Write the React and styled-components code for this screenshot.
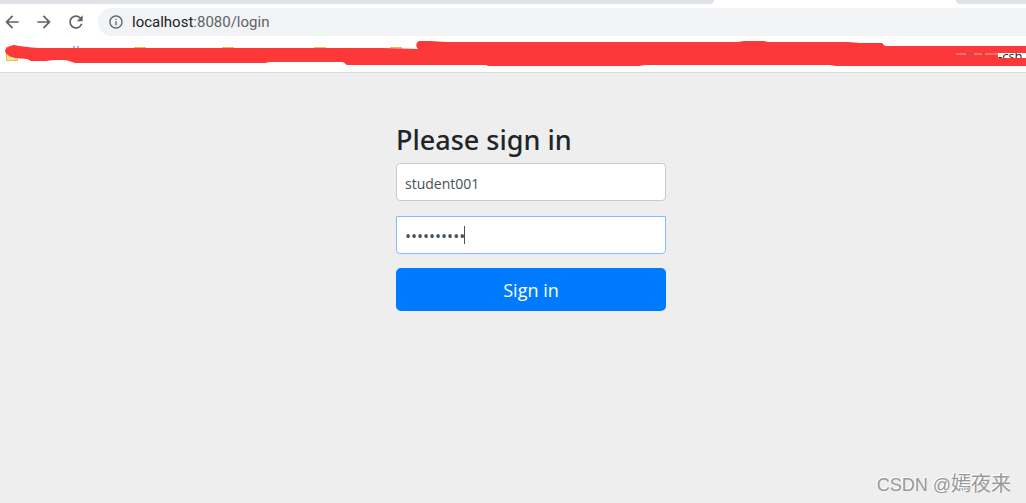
import { useState } from "react";
import styled, { createGlobalStyle } from "styled-components";
import { MdArrowBack, MdArrowForward, MdRefresh, MdInfoOutline } from "react-icons/md";

const GlobalStyle = createGlobalStyle`
	* {
		box-sizing: border-box;
	}

	body {
		margin: 0;
		background-color: #eee;
		font-family: "Open Sans", "Noto Sans", sans-serif;
		color: #212529;
	}
`;

const Page = styled.div`
	display: flex;
	flex-direction: column;
	min-height: 100vh;
	overflow: hidden;
`;

const TabStrip = styled.div`
	display: flex;
	justify-content: space-between;
	height: 4px;
	background-color: #fff;
`;

const InactiveTabs = styled.div`
	width: ${({ $width }) => $width};
	background-color: #dee1e6;
	border-radius: ${({ $side }) => ($side === "left" ? "0 0 6px 0" : "0 0 0 6px")};
`;

const Toolbar = styled.div`
	display: flex;
	align-items: center;
	height: 36px;
	padding-left: 2px;
	background-color: #fff;
`;

const NavButton = styled.button`
	display: flex;
	align-items: center;
	justify-content: center;
	width: 20px;
	height: 20px;
	margin-right: 12px;
	padding: 0;
	border: 0;
	background: none;
	color: #5f6368;
	font-size: 20px;
`;

const AddressBar = styled.div`
	display: flex;
	flex: 1;
	align-items: center;
	gap: 8px;
	height: 28px;
	padding-left: 10px;
	border-radius: 14px 0 0 14px;
	background-color: #f1f3f4;
	color: #5f6368;
	font-family: Roboto, sans-serif;
	font-size: 15px;

	& b {
		color: #202124;
		font-weight: 400;
	}
`;

const BookmarksBar = styled.div`
	position: relative;
	display: grid;
	grid-template-columns: 128px 88px 92px 76px 1fr;
	height: 33px;
	padding: 7px 0 0 6px;
	border-bottom: 1px solid #d9d9d9;
	background-color: #fff;
`;

const Folder = styled.span`
	width: 12px;
	height: 14px;
	border: 1px solid #e8c04a;
	background-color: #fde68c;
`;

const Scribble = styled.svg`
	position: absolute;
	top: 0;
	left: 0;
`;

const BookmarkTail = styled.span`
	position: absolute;
	top: 13px;
	right: 0;
	display: flex;
	align-items: center;
	width: 28px;
	height: 5px;
	overflow: hidden;
	background-color: #fff;
	color: #202124;
	font-size: 13px;
	line-height: 12px;
`;

/* the browser window is wider than the visible part */
const Main = styled.main`
	flex: 1;
	padding: 50px 0 0 36px;
`;

const Form = styled.form`
	display: flex;
	flex-direction: column;
	width: 270px;
	margin: 0 auto;
`;

const Title = styled.h2`
	margin: 0 0 6px;
	font-family: "Noto Sans", sans-serif;
	font-size: 27px;
	font-weight: 500;
	line-height: 34px;
`;

const Field = styled.div`
	position: relative;
	margin-bottom: ${({ $gap }) => $gap};
`;

const Input = styled.input`
	display: block;
	width: 100%;
	height: 38px;
	padding: 2px 8px 0;
	border: 1px solid ${({ $active }) => ($active ? "#80bdff" : "#c8cacc")};
	border-radius: ${({ $active }) => ($active ? "0 0 4px 4px" : "4px")};
	outline: none;
	background-color: #fff;
	color: #495057;
	font-family: inherit;
	font-size: ${({ $active }) => ($active ? "16px" : "14px")};
`;

const Caret = styled.span`
	position: absolute;
	top: 10px;
	left: 68px;
	width: 1px;
	height: 18px;
	background-color: #495057;
`;

const SubmitButton = styled.button`
	height: 43px;
	padding: 0;
	border: 0;
	border-radius: 5px;
	background-color: #007bff;
	color: #fff;
	font-family: inherit;
	font-size: 18px;
`;

const Watermark = styled.footer`
	padding: 0 15px 5px;
	color: #999;
	font-family: "Liberation Sans", "Noto Sans CJK SC", sans-serif;
	font-size: 18px;
	line-height: 26px;
	text-align: right;
	text-shadow: -1px -1px 0 #fff;

	& span {
		font-size: 20px;
		font-weight: 400;
	}
`;

const Bookmarks = () => (
	<BookmarksBar>
		<Folder />
		<Folder />
		<Folder />
		<Folder />
		<Folder />
		<Scribble width="1026" height="32" viewBox="0 0 1026 32">
			<path d="M73 7h2M77 7h2" stroke="#5058c8" strokeWidth="1" />
			<path
				d="M5 10Q7 6 14 5Q24 7 39 8H382L418 9Q414 4 419 1L430 1L446 2H738L744 1H764L768 2H848L860 3H882L885 6H1026V26H836L830 25H645L639 26H488L486 25H347L343 22H270L265 23H75L66 20H54L46 21H31L27 19L15 18Q5 16 5 10Z"
				fill="#fc3838"
			/>
			<path d="M956 14H1002" stroke="#fba3a0" />
			<path d="M966 14H974M982 14H985" stroke="#8f3034" />
		</Scribble>
		<BookmarkTail>-csh</BookmarkTail>
	</BookmarksBar>
);

const LoginForm = () => {
	const [username, setUsername] = useState("student001");
	const [password, setPassword] = useState("student001");

	return (
		<Form onSubmit={(event) => event.preventDefault()}>
			<Title>Please sign in</Title>
			<Field $gap="15px">
				<Input
					type="text"
					aria-label="Username"
					value={username}
					onChange={({ target }) => setUsername(target.value)}
				/>
			</Field>
			<Field $gap="14px">
				<Input
					type="password"
					aria-label="Password"
					$active
					value={password}
					onChange={({ target }) => setPassword(target.value)}
				/>
				<Caret />
			</Field>
			<SubmitButton type="submit">Sign in</SubmitButton>
		</Form>
	);
};

const App = () => (
	<Page>
		<GlobalStyle />
		<TabStrip>
			<InactiveTabs $side="left" $width="calc(100% - 312px)" />
			<InactiveTabs $side="right" $width="70px" />
		</TabStrip>
		<Toolbar>
			<NavButton aria-label="Back">
				<MdArrowBack />
			</NavButton>
			<NavButton aria-label="Forward">
				<MdArrowForward />
			</NavButton>
			<NavButton aria-label="Reload">
				<MdRefresh />
			</NavButton>
			<AddressBar>
				<MdInfoOutline size={16} />
				<span>
					<b>localhost</b>:8080/login
				</span>
			</AddressBar>
		</Toolbar>
		<Bookmarks />
		<Main>
			<LoginForm />
		</Main>
		<Watermark>
			CSDN @<span>嫣夜来</span>
		</Watermark>
	</Page>
);

export default App;
